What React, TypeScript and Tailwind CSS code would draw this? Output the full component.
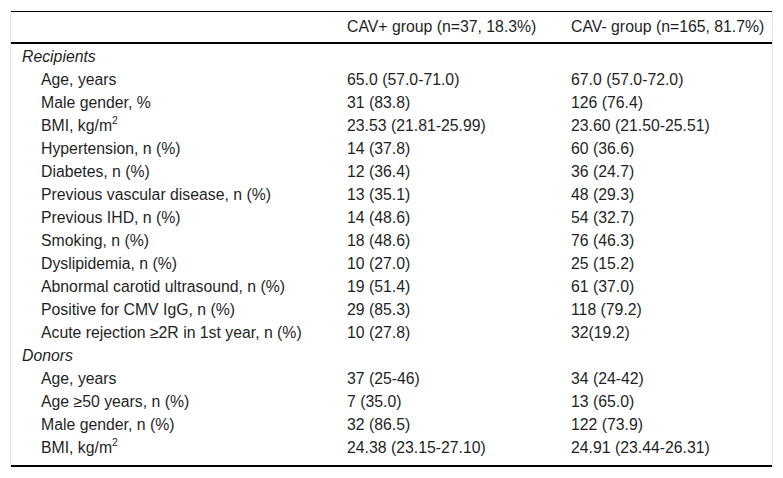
import React from "react";

type Row = { label: React.ReactNode; a: React.ReactNode; b: React.ReactNode; section?: boolean };

const sup2 = <sup className="text-[10.5px] relative -top-[1px] align-super leading-none">2</sup>;

const rows: Row[] = [
  { label: "Recipients", a: "", b: "", section: true },
  { label: "Age, years", a: "65.0 (57.0-71.0)", b: "67.0 (57.0-72.0)" },
  { label: "Male gender, %", a: "31 (83.8)", b: "126 (76.4)" },
  { label: <>BMI, kg/m{sup2}</>, a: "23.53 (21.81-25.99)", b: "23.60 (21.50-25.51)" },
  { label: "Hypertension, n (%)", a: "14 (37.8)", b: "60 (36.6)" },
  { label: "Diabetes, n (%)", a: "12 (36.4)", b: "36 (24.7)" },
  { label: "Previous vascular disease, n (%)", a: "13 (35.1)", b: "48 (29.3)" },
  { label: "Previous IHD, n (%)", a: "14 (48.6)", b: "54 (32.7)" },
  { label: "Smoking, n (%)", a: "18 (48.6)", b: "76 (46.3)" },
  { label: "Dyslipidemia, n (%)", a: "10 (27.0)", b: "25 (15.2)" },
  { label: "Abnormal carotid ultrasound, n (%)", a: "19 (51.4)", b: "61 (37.0)" },
  { label: "Positive for CMV IgG, n (%)", a: "29 (85.3)", b: "118 (79.2)" },
  { label: "Acute rejection ≥2R in 1st year, n (%)", a: "10 (27.8)", b: "32(19.2)" },
  { label: "Donors", a: "", b: "", section: true },
  { label: "Age, years", a: "37 (25-46)", b: "34 (24-42)" },
  { label: "Age ≥50 years, n (%)", a: "7 (35.0)", b: "13 (65.0)" },
  { label: "Male gender, n (%)", a: "32 (86.5)", b: "122 (73.9)" },
  { label: <>BMI, kg/m{sup2}</>, a: "24.38 (23.15-27.10)", b: "24.91 (23.44-26.31)" },
];

export default function App() {
  return (
    <div
      className="bg-white w-[783px] h-[478px] pt-[11px] pl-[10px] text-[#1f1f1f] text-[15.8px] leading-[18px]"
      style={{ fontFamily: '"Liberation Sans", Arial, sans-serif' }}
    >
      <div className="w-[763px] border-x border-[#e4e4e4]">
        <div className="grid grid-cols-[336px_224px_1fr] h-[33px] items-center border-t border-b-2 border-black">
          <div />
          <div>CAV+ group (n=37, 18.3%)</div>
          <div>CAV- group (n=165, 81.7%)</div>
        </div>
        <div className="pt-[1px] pb-[6px] border-b-2 border-black">
          {rows.map((r, i) => (
            <div key={i} className="grid grid-cols-[336px_224px_1fr] h-[23px] items-center">
              <div className={r.section ? "pl-[11px] italic" : "pl-[30px]"}>{r.label}</div>
              <div>{r.a}</div>
              <div>{r.b}</div>
            </div>
          ))}
        </div>
      </div>
    </div>
  );
}
